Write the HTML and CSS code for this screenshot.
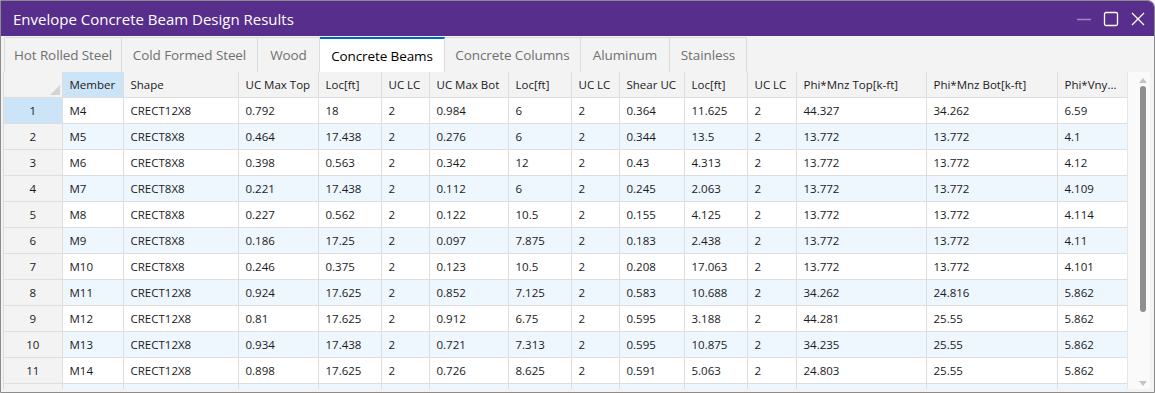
FILE: index.html
```html
<!DOCTYPE html>
<html>
<head>
<meta charset="utf-8">
<link rel="stylesheet" href="styles.css">
</head>
<body>
<div class="window">
  <div class="titlebar">
    <div class="title">Envelope Concrete Beam Design Results</div>
    <div class="controls">
      <svg class="ctl" width="16" height="16" viewBox="0 0 16 16"><line x1="1" y1="8.5" x2="15" y2="8.5" stroke="#9d89c0" stroke-width="1.5"/></svg>
      <svg class="ctl" width="16" height="16" viewBox="0 0 16 16"><rect x="1.5" y="1.5" width="13" height="13" rx="1.5" fill="none" stroke="#fff" stroke-width="1.3"/></svg>
      <svg class="ctl" width="16" height="16" viewBox="0 0 16 16"><path d="M2 2 L14 14 M14 2 L2 14" stroke="#fff" stroke-width="1.3"/></svg>
    </div>
  </div>
  <div class="tabs">
    <div class="tab w1">Hot Rolled Steel</div>
    <div class="tab w2">Cold Formed Steel</div>
    <div class="tab w3">Wood</div>
    <div class="tab w4 active">Concrete Beams</div>
    <div class="tab w5">Concrete Columns</div>
    <div class="tab w6">Aluminum</div>
    <div class="tab w7">Stainless</div>
  </div>
  <div class="content">
    <div class="gridwrap">
      <table class="grid">
        <colgroup>
          <col class="c0"><col class="c1"><col class="c2"><col class="c3"><col class="c4"><col class="c5"><col class="c6"><col class="c7"><col class="c8"><col class="c9"><col class="c10"><col class="c11"><col class="c12"><col class="c13"><col class="c14">
        </colgroup>
        <thead>
          <tr>
            <th class="corner"><span class="tri"></span></th>
            <th class="sel">Member</th><th>Shape</th><th>UC Max Top</th><th>Loc[ft]</th><th>UC LC</th><th>UC Max Bot</th><th>Loc[ft]</th><th>UC LC</th><th>Shear UC</th><th>Loc[ft]</th><th>UC LC</th><th>Phi*Mnz Top[k-ft]</th><th>Phi*Mnz Bot[k-ft]</th><th>Phi*Vny...</th>
          </tr>
        </thead>
        <tbody>
          <tr><th class="rh sel">1</th><td>M4</td><td>CRECT12X8</td><td>0.792</td><td>18</td><td>2</td><td>0.984</td><td>6</td><td>2</td><td>0.364</td><td>11.625</td><td>2</td><td>44.327</td><td>34.262</td><td>6.59</td></tr>
          <tr class="alt"><th class="rh">2</th><td>M5</td><td>CRECT8X8</td><td>0.464</td><td>17.438</td><td>2</td><td>0.276</td><td>6</td><td>2</td><td>0.344</td><td>13.5</td><td>2</td><td>13.772</td><td>13.772</td><td>4.1</td></tr>
          <tr><th class="rh">3</th><td>M6</td><td>CRECT8X8</td><td>0.398</td><td>0.563</td><td>2</td><td>0.342</td><td>12</td><td>2</td><td>0.43</td><td>4.313</td><td>2</td><td>13.772</td><td>13.772</td><td>4.12</td></tr>
          <tr class="alt"><th class="rh">4</th><td>M7</td><td>CRECT8X8</td><td>0.221</td><td>17.438</td><td>2</td><td>0.112</td><td>6</td><td>2</td><td>0.245</td><td>2.063</td><td>2</td><td>13.772</td><td>13.772</td><td>4.109</td></tr>
          <tr><th class="rh">5</th><td>M8</td><td>CRECT8X8</td><td>0.227</td><td>0.562</td><td>2</td><td>0.122</td><td>10.5</td><td>2</td><td>0.155</td><td>4.125</td><td>2</td><td>13.772</td><td>13.772</td><td>4.114</td></tr>
          <tr class="alt"><th class="rh">6</th><td>M9</td><td>CRECT8X8</td><td>0.186</td><td>17.25</td><td>2</td><td>0.097</td><td>7.875</td><td>2</td><td>0.183</td><td>2.438</td><td>2</td><td>13.772</td><td>13.772</td><td>4.11</td></tr>
          <tr><th class="rh">7</th><td>M10</td><td>CRECT8X8</td><td>0.246</td><td>0.375</td><td>2</td><td>0.123</td><td>10.5</td><td>2</td><td>0.208</td><td>17.063</td><td>2</td><td>13.772</td><td>13.772</td><td>4.101</td></tr>
          <tr class="alt"><th class="rh">8</th><td>M11</td><td>CRECT12X8</td><td>0.924</td><td>17.625</td><td>2</td><td>0.852</td><td>7.125</td><td>2</td><td>0.583</td><td>10.688</td><td>2</td><td>34.262</td><td>24.816</td><td>5.862</td></tr>
          <tr><th class="rh">9</th><td>M12</td><td>CRECT12X8</td><td>0.81</td><td>17.625</td><td>2</td><td>0.912</td><td>6.75</td><td>2</td><td>0.595</td><td>3.188</td><td>2</td><td>44.281</td><td>25.55</td><td>5.862</td></tr>
          <tr class="alt"><th class="rh">10</th><td>M13</td><td>CRECT12X8</td><td>0.934</td><td>17.438</td><td>2</td><td>0.721</td><td>7.313</td><td>2</td><td>0.595</td><td>10.875</td><td>2</td><td>34.235</td><td>25.55</td><td>5.862</td></tr>
          <tr><th class="rh">11</th><td>M14</td><td>CRECT12X8</td><td>0.898</td><td>17.625</td><td>2</td><td>0.726</td><td>8.625</td><td>2</td><td>0.591</td><td>5.063</td><td>2</td><td>24.803</td><td>25.55</td><td>5.862</td></tr>
          <tr class="alt"><th class="rh"></th><td></td><td></td><td></td><td></td><td></td><td></td><td></td><td></td><td></td><td></td><td></td><td></td><td></td><td></td></tr>
        </tbody>
      </table>
    </div>
    <div class="scrollbar">
      <div class="arrow up"></div>
      <div class="thumb"></div>
      <div class="arrow down"></div>
    </div>
  </div>
</div>
</body>
</html>
```

FILE: styles.css
```css
* { box-sizing: border-box; }
html, body { margin: 0; padding: 0; background: #fff; }
body { font-family: "Open Sans", "Noto Sans", sans-serif; }

.window {
  width: 1155px;
  height: 393px;
  border: 1px solid #8c8c8c;
  border-top-right-radius: 7px;
  overflow: hidden;
  background: #f3f3f3;
  display: flex;
  flex-direction: column;
}

.titlebar {
  height: 35px;
  flex: 0 0 35px;
  background: #582e8d;
  display: flex;
  align-items: center;
  justify-content: space-between;
  padding-left: 12px;
  padding-right: 8px;
}
.title {
  color: #fff;
  font-size: 15px;
  font-weight: 500;
  letter-spacing: 0;
}
.controls { display: flex; gap: 11px; align-items: center; }
.ctl { display: block; }

.tabs {
  display: flex;
  height: 36px;
  flex: 0 0 36px;
  padding: 1px 0 0 3px;
  background: #f3f3f3;
}
.tab {
  height: 35px;
  border: 1px solid #dcdcdc;
  border-left: none;
  border-bottom: none;
  display: flex;
  align-items: center;
  justify-content: center;
  font-size: 13.5px;
  color: #707070;
  background: #f3f3f3;
  letter-spacing: -0.1px;
}
.tab.w1 { width: 118px; border-left: 1px solid #dcdcdc; }
.tab.w2 { width: 136px; }
.tab.w3 { width: 62px; }
.tab.w4 { width: 125px; }
.tab.w5 { width: 136px; }
.tab.w6 { width: 89px; }
.tab.w7 { width: 77px; }
.tab.active {
  background: #fff;
  color: #000;
  border-top: 2px solid #0067c0;
}

.content {
  flex: 1;
  display: flex;
  padding: 0 3px 3px 2px;
  min-height: 0;
  background: #f3f3f3;
}
.gridwrap {
  width: 1124px;
  overflow: hidden;
  background: #fff;
  border-left: 1px solid #dcdcdc;
}
.grid {
  border-collapse: collapse;
  table-layout: fixed;
  width: 1123px;
  font-size: 11.5px;
  color: #1a1a1a;
}
.grid th, .grid td {
  height: 26px;
  border: 1px solid #dedede;
  padding: 0 0 0 7px;
  text-align: left;
  font-weight: normal;
  white-space: nowrap;
  overflow: hidden;
}
.grid tr:first-child th, .grid tr:first-child td { border-top: none; }
.grid tr > :first-child { border-left: none; }
.grid thead th {
  background: #f3f3f3;
  height: 25px;
  color: #1a1a1a;
}
.grid thead th.sel { background: #cce4f7; }
.grid th.corner { position: relative; background: #f3f3f3; }
.tri {
  position: absolute;
  right: 2px;
  bottom: 2px;
  width: 0; height: 0;
  border-left: 10px solid transparent;
  border-bottom: 10px solid #d4d4d4;
}
.grid th.rh {
  background: #f3f3f3;
  text-align: center;
  padding: 0;
}
.grid th.rh.sel { background: #cce4f7; }
.grid tr.alt td { background: #eef6fe; }

.c0 { width: 58px; }
.c1 { width: 61px; }
.c2 { width: 115px; }
.c3 { width: 80px; }
.c4 { width: 63px; }
.c5 { width: 48px; }
.c6 { width: 79px; }
.c7 { width: 63px; }
.c8 { width: 48px; }
.c9 { width: 65px; }
.c10 { width: 63px; }
.c11 { width: 49px; }
.c12 { width: 130px; }
.c13 { width: 131px; }
.c14 { width: 70px; }

.scrollbar {
  width: 23px;
  background: #fafafa;
  border-left: 1px solid #e6e6e6;
  position: relative;
  display: flex;
  flex-direction: column;
  align-items: center;
  padding-left: 8px;
}
.arrow {
  width: 0; height: 0;
  border-left: 4px solid transparent;
  border-right: 4px solid transparent;
}
.arrow.up { border-bottom: 5px solid #c4c4c4; margin-top: 6px; }
.arrow.down { border-top: 5px solid #c4c4c4; margin-top: auto; margin-bottom: 3px; }
.thumb {
  width: 6px;
  height: 226px;
  background: #8f8f8f;
  border-radius: 3px;
  margin-top: 3px;
}
```
